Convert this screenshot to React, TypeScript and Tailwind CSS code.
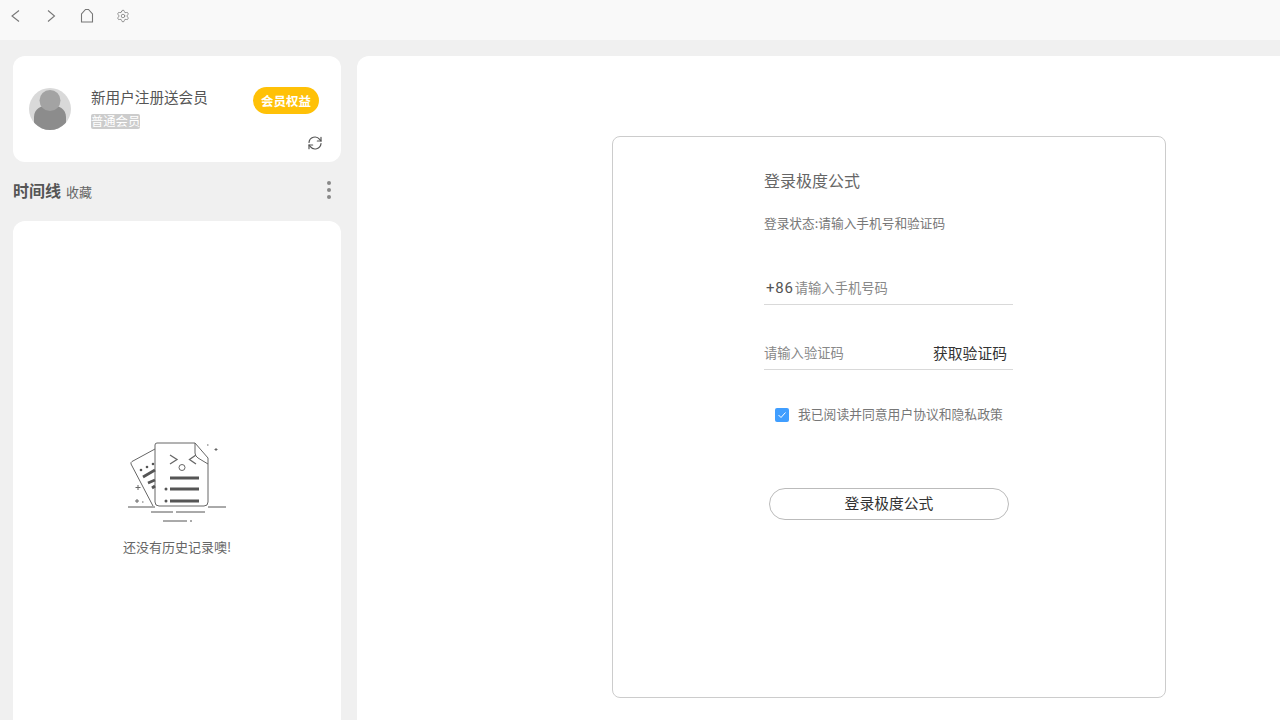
import React from 'react';
import { Settings } from 'lucide-react';

const cjk = { fontFamily: '"Noto Sans CJK SC", "Liberation Sans", sans-serif' };

function Toolbar() {
  return (
    <div className="h-10 bg-[#f9f9f9] relative shrink-0">
      <svg width="110" height="32" viewBox="0 0 110 32" fill="none" stroke="#777" strokeWidth="1.1">
        <path d="M19 10.5 L12 16 L19 21.5" />
        <path d="M48 10.5 L54.5 16 L48 21.5" />
        <path d="M81.5 22 V14 L85.5 9.5 H88.5 L92.5 14 V22 Z" />
      </svg>
      <Settings className="absolute left-[116px] top-[9px]" size={14} strokeWidth={1.3} color="#777" />
    </div>
  );
}

function Avatar() {
  return (
    <div className="w-[42px] h-[42px] rounded-full bg-[#d9d9d9] overflow-hidden shrink-0">
      <svg width="42" height="42" viewBox="0 0 42 42">
        <path d="M5 42 V29 C5 21 12 17 21 17 C30 17 37 21 37 29 V42 Z" fill="#8c8c8c" />
        <circle cx="21" cy="12.5" r="10.5" fill="#a3a3a3" />
      </svg>
    </div>
  );
}

function EmptyIllustration() {
  return (
    <svg width="100" height="82" viewBox="0 0 100 82" fill="none" stroke="#666" strokeWidth="1">
      {/* back sheet */}
      <path d="M28 8 L5 20.5 Q3.5 21.5 4 23 L26 65" />
      {/* front sheet */}
      <path d="M30 2 H68 L81 17 V61 Q81 65 77 65 H32 Q28 65 28 61 V4 Q28 2 30 2 Z" fill="#fff" />
      <path d="M68 2 V12 Q68 15 71 17 L81 23" />
      {/* face */}
      <path d="M43 14 L50 18.5 L43 23" strokeWidth="1.3" />
      <path d="M69 14 L62.5 18.5 L69 23" strokeWidth="1.3" />
      <circle cx="55" cy="26.5" r="3" />
      {/* text lines */}
      <path d="M43 37 H72 M43 48 H72 M43 60 H72" stroke="#555" strokeWidth="2.8" />
      <circle cx="39" cy="48" r="1.5" fill="#555" stroke="none" />
      <circle cx="39" cy="60" r="1.5" fill="#555" stroke="none" />
      {/* back sheet marks */}
      <path d="M16 36 L28 29 M21 42 L28 39 M25 47 L28 45" stroke="#555" strokeWidth="2.8" />
      <circle cx="14" cy="29" r="1.3" fill="#555" stroke="none" />
      <circle cx="20" cy="26" r="1.3" fill="#555" stroke="none" />
      <circle cx="26" cy="23" r="1.3" fill="#555" stroke="none" />
      {/* sparkles */}
      <path d="M11 44 v5 M8.5 46.5 h5 M10 58 v4 M8 60 h4 M15 61 h1.5 M80 4 h1.5 M89 7 v3 M87.5 8.5 h3" />
      <path d="M1 66 H28 M81 66 H99" stroke="#555" />
      <path d="M24 71 H46 M49 71 H78 M36 80 H60 M63 80 H65" stroke="#555" />
    </svg>
  );
}

function Sidebar() {
  return (
    <div className="w-[328px] ml-[13px] shrink-0 flex flex-col">
      <div className="h-[106px] bg-white rounded-xl relative pl-4 pt-8 flex items-start">
        <Avatar />
        <div className="ml-5 flex flex-col items-start">
          <div className="text-[14.6px] leading-[19px] text-[#555] -mt-[1px]">新用户注册送会员</div>
          <div className="mt-2 text-[12.3px] leading-[15px] text-white bg-[#cccccc] rounded-[2px]">普通会员</div>
        </div>
        <div className="absolute left-[240px] top-[31px] w-[66px] h-[27px] rounded-full bg-[#ffc107] text-white text-[12.5px] font-bold flex items-center justify-center pt-[1px]">
          会员权益
        </div>
        <svg className="absolute left-[294px] top-[79px]" width="16" height="16" viewBox="0 0 24 24" fill="none" stroke="#555" strokeWidth="1.8" strokeLinecap="round" strokeLinejoin="round">
          <path d="M3 11 A9 9 0 0 1 19 6.5 L21 9" />
          <path d="M21 3.5 V9 H15.5" />
          <path d="M21 13 A9 9 0 0 1 5 17.5 L3 15" />
          <path d="M3 20.5 V15 H8.5" />
        </svg>
      </div>
      <div className="h-[59px] flex items-center justify-between pb-[3px]">
        <div className="flex items-baseline">
          <span className="text-base font-bold text-[#555]">时间线</span>
          <span className="ml-[5px] text-[13px] text-[#666]">收藏</span>
        </div>
        <div className="flex flex-col gap-[3px] mr-[10px]">
          <span className="w-1 h-1 rounded-full bg-[#888]" />
          <span className="w-1 h-1 rounded-full bg-[#888]" />
          <span className="w-1 h-1 rounded-full bg-[#888]" />
        </div>
      </div>
      <div className="h-[499px] bg-white rounded-t-xl flex flex-col items-center pt-[220px]">
        <EmptyIllustration />
        <div className="mt-[15px] text-[13px] leading-[18px] text-[#666]">还没有历史记录噢!</div>
      </div>
    </div>
  );
}

function LoginCard() {
  return (
    <div className="ml-[255px] mt-20 w-[554px] h-[562px] border border-[#ccc] rounded-lg bg-white pl-[151px] shrink-0">
      <div className="w-[249px]">
        <div className="mt-8 text-base leading-[22px] text-[#666]">登录极度公式</div>
        <div className="mt-[23px] text-[12.7px] leading-[18px] text-[#777]">登录状态:请输入手机号和验证码</div>
        <div className="mt-8 h-[41px] border-b border-[#d9d9d9] flex items-center pt-2 pb-[1px]">
          <span className="ml-[2px] mt-[2px] text-[15px] text-[#555] tracking-[0.8px]" style={{ fontFamily: '"Roboto", sans-serif' }}>+86</span>
          <span className="ml-[1px] text-[13.3px] text-[#888]">请输入手机号码</span>
        </div>
        <div className="mt-6 h-[41px] border-b border-[#d9d9d9] flex items-center justify-between pt-2 pb-[1px]">
          <span className="text-[13.3px] text-[#888]">请输入验证码</span>
          <span className="text-[14.8px] text-[#333] mr-[6px] mt-[2px]">获取验证码</span>
        </div>
        <div className="mt-9 ml-[11px] h-[18px] flex items-center">
          <span className="w-[14px] h-[14px] rounded-[2px] bg-[#409eff] flex items-center justify-center">
            <svg width="10" height="10" viewBox="0 0 10 10" fill="none" stroke="#fff" strokeWidth="1">
              <path d="M1.5 5 L4 7.5 L8.5 2.5" />
            </svg>
          </span>
          <span className="ml-[9px] self-start text-[12.8px] leading-4 text-[#777]">我已阅读并同意用户协议和隐私政策</span>
        </div>
        <div className="mt-16 ml-[5px] w-[240px] h-8 rounded-full border border-[#bbb] flex items-center justify-center pb-[2px] text-[14.8px] text-[#333]">
          登录极度公式
        </div>
      </div>
    </div>
  );
}

export default function App() {
  return (
    <div className="w-[1280px] h-[720px] overflow-hidden bg-[#f0f0f0] flex flex-col" style={cjk}>
      <Toolbar />
      <div className="flex mt-4 flex-1 min-h-0">
        <Sidebar />
        <div className="ml-4 flex-1 bg-white rounded-tl-xl flex">
          <LoginCard />
        </div>
      </div>
    </div>
  );
}
